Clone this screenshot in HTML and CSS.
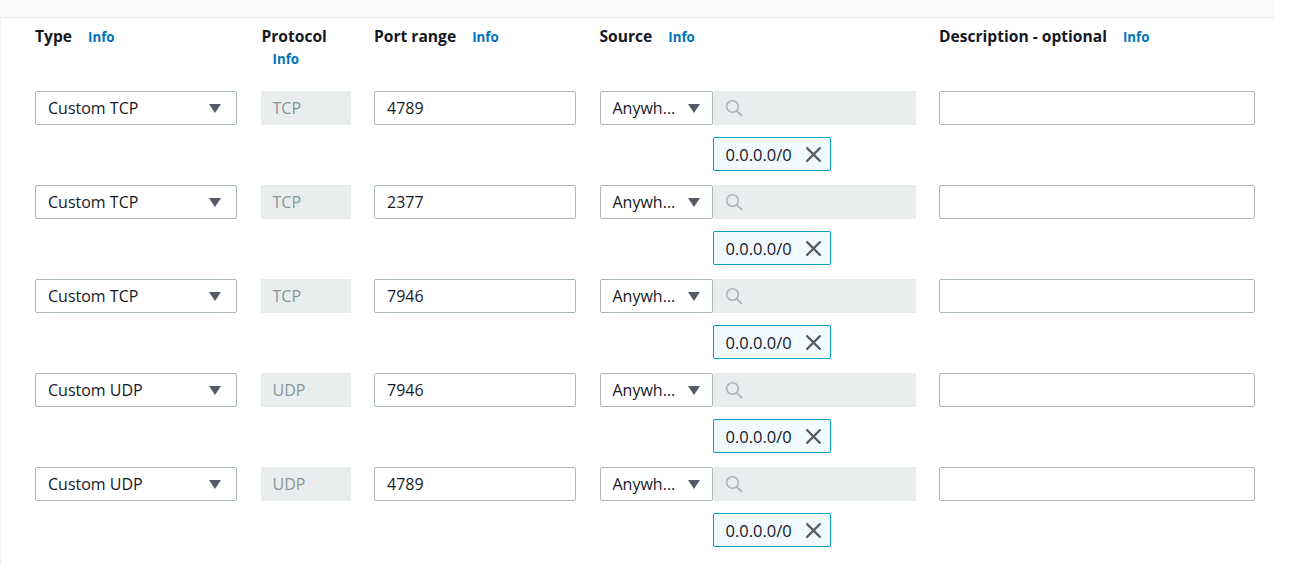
FILE: index.html
```html
<!DOCTYPE html>
<html>
<head>
<meta charset="utf-8">
<link rel="stylesheet" href="styles.css">
</head>
<body>
<div class="page">
  <div class="topband"></div>
  <div class="panel">
    <div class="cols head">
      <div class="h"><span class="label">Type</span><a class="info">Info</a></div>
      <div class="h proto"><span class="label">Protocol</span><a class="info">Info</a></div>
      <div class="h"><span class="label">Port range</span><a class="info">Info</a></div>
      <div class="h"><span class="label">Source</span><a class="info">Info</a></div>
      <div class="h"><span class="label">Description - optional</span><a class="info">Info</a></div>
    </div>

    <div class="rules">
      <div class="cols rule">
        <div class="select"><span>Custom TCP</span><span class="caret"></span></div>
        <div class="proto-box">TCP</div>
        <div class="input">4789</div>
        <div class="source">
          <div class="src-row">
            <div class="select small"><span>Anywh…</span><span class="caret"></span></div>
            <div class="search"><svg width="18" height="18" viewBox="0 0 18 18"><circle cx="7.5" cy="7.5" r="5.8" fill="none" stroke="#aab7b8" stroke-width="1.6"/><line x1="11.8" y1="11.8" x2="16.5" y2="16.5" stroke="#aab7b8" stroke-width="1.8" stroke-linecap="round"/></svg></div>
          </div>
          <div class="token"><span>0.0.0.0/0</span><svg width="17" height="17" viewBox="0 0 16 16"><path d="M2 2 L14 14 M14 2 L2 14" stroke="#545b64" stroke-width="2" stroke-linecap="round"/></svg></div>
        </div>
        <div class="input desc"></div>
      </div>

      <div class="cols rule">
        <div class="select"><span>Custom TCP</span><span class="caret"></span></div>
        <div class="proto-box">TCP</div>
        <div class="input">2377</div>
        <div class="source">
          <div class="src-row">
            <div class="select small"><span>Anywh…</span><span class="caret"></span></div>
            <div class="search"><svg width="18" height="18" viewBox="0 0 18 18"><circle cx="7.5" cy="7.5" r="5.8" fill="none" stroke="#aab7b8" stroke-width="1.6"/><line x1="11.8" y1="11.8" x2="16.5" y2="16.5" stroke="#aab7b8" stroke-width="1.8" stroke-linecap="round"/></svg></div>
          </div>
          <div class="token"><span>0.0.0.0/0</span><svg width="17" height="17" viewBox="0 0 16 16"><path d="M2 2 L14 14 M14 2 L2 14" stroke="#545b64" stroke-width="2" stroke-linecap="round"/></svg></div>
        </div>
        <div class="input desc"></div>
      </div>

      <div class="cols rule">
        <div class="select"><span>Custom TCP</span><span class="caret"></span></div>
        <div class="proto-box">TCP</div>
        <div class="input">7946</div>
        <div class="source">
          <div class="src-row">
            <div class="select small"><span>Anywh…</span><span class="caret"></span></div>
            <div class="search"><svg width="18" height="18" viewBox="0 0 18 18"><circle cx="7.5" cy="7.5" r="5.8" fill="none" stroke="#aab7b8" stroke-width="1.6"/><line x1="11.8" y1="11.8" x2="16.5" y2="16.5" stroke="#aab7b8" stroke-width="1.8" stroke-linecap="round"/></svg></div>
          </div>
          <div class="token"><span>0.0.0.0/0</span><svg width="17" height="17" viewBox="0 0 16 16"><path d="M2 2 L14 14 M14 2 L2 14" stroke="#545b64" stroke-width="2" stroke-linecap="round"/></svg></div>
        </div>
        <div class="input desc"></div>
      </div>

      <div class="cols rule">
        <div class="select"><span>Custom UDP</span><span class="caret"></span></div>
        <div class="proto-box">UDP</div>
        <div class="input">7946</div>
        <div class="source">
          <div class="src-row">
            <div class="select small"><span>Anywh…</span><span class="caret"></span></div>
            <div class="search"><svg width="18" height="18" viewBox="0 0 18 18"><circle cx="7.5" cy="7.5" r="5.8" fill="none" stroke="#aab7b8" stroke-width="1.6"/><line x1="11.8" y1="11.8" x2="16.5" y2="16.5" stroke="#aab7b8" stroke-width="1.8" stroke-linecap="round"/></svg></div>
          </div>
          <div class="token"><span>0.0.0.0/0</span><svg width="17" height="17" viewBox="0 0 16 16"><path d="M2 2 L14 14 M14 2 L2 14" stroke="#545b64" stroke-width="2" stroke-linecap="round"/></svg></div>
        </div>
        <div class="input desc"></div>
      </div>

      <div class="cols rule">
        <div class="select"><span>Custom UDP</span><span class="caret"></span></div>
        <div class="proto-box">UDP</div>
        <div class="input">4789</div>
        <div class="source">
          <div class="src-row">
            <div class="select small"><span>Anywh…</span><span class="caret"></span></div>
            <div class="search"><svg width="18" height="18" viewBox="0 0 18 18"><circle cx="7.5" cy="7.5" r="5.8" fill="none" stroke="#aab7b8" stroke-width="1.6"/><line x1="11.8" y1="11.8" x2="16.5" y2="16.5" stroke="#aab7b8" stroke-width="1.8" stroke-linecap="round"/></svg></div>
          </div>
          <div class="token"><span>0.0.0.0/0</span><svg width="17" height="17" viewBox="0 0 16 16"><path d="M2 2 L14 14 M14 2 L2 14" stroke="#545b64" stroke-width="2" stroke-linecap="round"/></svg></div>
        </div>
        <div class="input desc"></div>
      </div>
    </div>
  </div>
</div>
</body>
</html>
```

FILE: styles.css
```css
* { box-sizing: border-box; }
html, body { margin: 0; padding: 0; background: #fff; }
body {
  font-family: "Open Sans", "Noto Sans", "Liberation Sans", sans-serif;
  color: #16191f;
  font-size: 16px;
}
.page { width: 1274px; }
.topband {
  height: 18px;
  background: #fafafa;
  border-bottom: 1px solid #eaeded;
}
.panel {
  border-left: 1px solid #f0f0f0;
  padding: 7px 0 18px 34px;
}
.cols {
  display: grid;
  grid-template-columns: 202px 90px 202px 316px 316px;
  column-gap: 23.5px;
}
.head { margin-bottom: 20px; }
.h {
  line-height: 23px;
  display: flex;
  flex-wrap: wrap;
  align-items: baseline;
  column-gap: 16px;
}
.h .label { font-weight: 700; font-size: 15.6px; color: #16191f; }
.h .info { font-weight: 700; font-size: 13.3px; color: #0073bb; }
.h.proto { padding-left: 1px; }
.h.proto .info { margin-left: 11px; }
.rules { display: flex; flex-direction: column; row-gap: 14px; }
.rule { align-items: start; }
.select, .input, .proto-box {
  height: 34px;
  display: flex;
  align-items: center;
  padding: 0 12px;
  font-size: 16px;
}
.select {
  border: 1px solid #aab7b8;
  border-radius: 2px;
  justify-content: space-between;
  color: #16191f;
  padding-right: 15px;
}
.caret {
  width: 0; height: 0;
  border-left: 6px solid transparent;
  border-right: 6px solid transparent;
  border-top: 9px solid #545b64;
}
.proto-box {
  background: #eaeded;
  color: #879596;
}
.input {
  border: 1px solid #aab7b8;
  border-radius: 2px;
  color: #16191f;
}
.source { display: flex; flex-direction: column; row-gap: 12px; }
.src-row { display: flex; }
.select.small { width: 113px; padding: 0 12px 0 12px; }
.search {
  flex: 1;
  height: 34px;
  background: #eaeded;
  display: flex;
  align-items: center;
  padding-left: 12px;
}
.token {
  margin-left: 113px;
  width: 118px;
  height: 34px;
  border: 1px solid #00a1c9;
  border-radius: 2px;
  background: #f1faff;
  display: flex;
  align-items: center;
  justify-content: space-between;
  padding: 0 8px 0 12px;
  font-size: 16.5px;
  color: #16191f;
}
```
